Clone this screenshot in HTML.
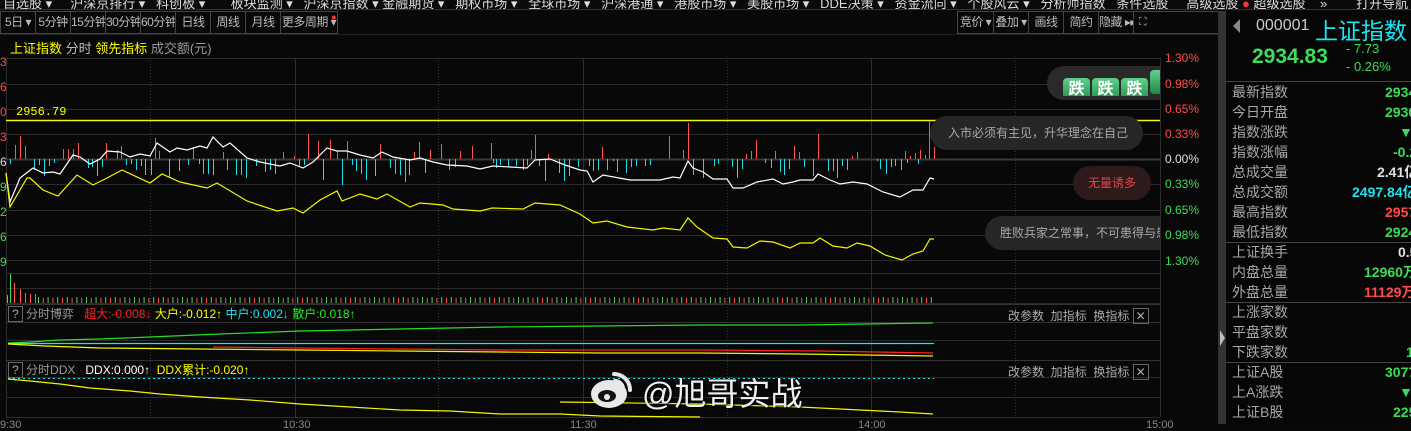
<!DOCTYPE html>
<html><head><meta charset="utf-8"><style>
*{margin:0;padding:0;box-sizing:border-box}
body{width:1411px;height:424px;overflow:hidden;background:#080808;font-family:"Liberation Sans","Noto Sans CJK SC",sans-serif;position:relative;color:#ccc}
.a{position:absolute;white-space:nowrap}
.tb{position:absolute;top:11px;height:23px;border:1px solid #444;display:flex}
.tb div{border-right:1px solid #444;color:#bbb;font-size:12px;line-height:21px;text-align:center;white-space:nowrap;overflow:hidden;letter-spacing:-0.5px;flex:none}
.tb div:last-child{border-right:none}
.lbl{position:absolute;left:1232px;font-size:14px;color:#a8a8a8;line-height:20px;white-space:nowrap}
.val{position:absolute;font-size:14px;font-weight:bold;line-height:20px;white-space:nowrap;font-family:"Liberation Sans","Noto Sans CJK SC",sans-serif}
.g{color:#3ddc5a}.r{color:#ff4b4b}.w{color:#e0e0e0}.c{color:#19e6f0}
.ax{position:absolute;left:1165px;font-size:12px;white-space:nowrap}
</style></head><body>
<div class="a" style="left:0;top:0;width:1411px;height:10px;background:#0a0a0a;border-bottom:1px solid #333;overflow:hidden">
<div class="a" style="top:-7px;left:3px;font-size:13px;color:#ddd">自选股 ▾ &nbsp;&nbsp;&nbsp; 沪深京排行 ▾ &nbsp; 科创板 ▾ &nbsp;&nbsp;&nbsp;&nbsp;&nbsp; 板块监测 ▾ &nbsp; 沪深京指数 ▾ 金融期货 ▾ &nbsp; 期权市场 ▾ &nbsp; 全球市场 ▾ &nbsp; 沪深港通 ▾ &nbsp; 港股市场 ▾ &nbsp; 美股市场 ▾ &nbsp; DDE决策 ▾ &nbsp; 资金流向 ▾ &nbsp; 个股风云 ▾ &nbsp; 分析师指数 &nbsp; 条件选股 &nbsp;&nbsp;&nbsp; 高级选股 <span style="color:#f33">●</span> 超级选股 &nbsp;&nbsp; » &nbsp;&nbsp;&nbsp;&nbsp;&nbsp;&nbsp; 打开导航</div></div>
<div class="tb" style="left:0;width:338px">
<div style="width:35px">5日 ▾</div><div style="width:35px">5分钟</div><div style="width:35px">15分钟</div><div style="width:35px">30分钟</div><div style="width:35px">60分钟</div><div style="width:35px">日线</div><div style="width:35px">周线</div><div style="width:35px">月线</div><div style="width:56px;position:relative;overflow:visible">更多周期 ▾<span style="position:absolute;right:1px;top:-5px;color:#f33;font-size:9px">●</span></div>
</div>
<div class="tb" style="left:957px;width:262px">
<div style="width:36px">竞价 ▾</div><div style="width:35px">叠加 ▾</div><div style="width:35px">画线</div><div style="width:35px">简约</div><div style="width:35px">隐藏 ▸▸</div><div style="width:17px;font-size:11px">⛶</div>
</div>
<div class="a" style="left:0;top:34px;width:1218px;height:1px;background:#222"></div>
<div class="a" style="left:10px;top:38px;font-size:13px"><span style="color:#ff0">上证指数</span> <span style="color:#bbb">分时</span> <span style="color:#ff0">领先指标</span> <span style="color:#999">成交额(元)</span></div>
<div class="a" style="left:0;top:50px;font-size:12px;color:#ff4b4b;line-height:25px;width:6px;overflow:hidden;white-space:normal">3<br>6<br>0<br>3<br><span style="color:#ddd">6</span><br><span style="color:#3ddc5a">9</span><br><span style="color:#3ddc5a">2</span><br><span style="color:#3ddc5a">6</span><br><span style="color:#3ddc5a">9</span></div>

<svg class="a" style="left:0;top:0" width="1218" height="424">
<g stroke="#2c2c2c" stroke-width="1" fill="none">
<path d="M6 58.5H1160M6 84.5H1160M6 109.5H1160M6 134.5H1160M6 184.5H1160M6 210.5H1160M6 235.5H1160M6 260.5H1160M6 273.5H1160M6 288.5H1160M6 303.5H1160M6 340.5H1160M6 377.5H1160M6 397.5H1160M6 417.5H1160"/>
<path d="M6.5 58V417M295.5 58V417M583.5 58V417M871.5 58V417M1160.5 58V417"/>
</g>
<path d="M6 159.5H1160" stroke="#3a3a3a" stroke-width="2"/>
<g stroke="#333" stroke-dasharray="1 2"><path d="M150.5 58V417M438.5 58V417M727.5 58V417M1015.5 58V417"/></g>
<path d="M6 120.5H1160" stroke="#f5f500" stroke-width="1.5"/>
<text x="16" y="115" fill="#ff0" font-size="12" font-family="Liberation Mono">2956.79</text>
<g stroke="#ff5555" stroke-width="1"><path d="M15.5 159V145M20.5 159V136M25.5 159V146M63.5 159V149M68.5 159V149M73.5 159V149M78.5 159V143M106.5 159V143M117.5 159V150M121.5 159V146M155.5 159V138M159.5 159V151M193.5 159V147M223.5 159V152M283.5 159V152M294.5 159V156M308.5 159V134M318.5 159V141M330.5 159V140M337.5 159V151M347.5 159V141M380.5 159V144M414.5 159V152M419.5 159V142M430.5 159V150M441.5 159V144M460.5 159V151M472.5 159V146M491.5 159V143M531.5 159V150M535.5 159V135M548.5 159V154M602.5 159V147M669.5 159V136M683.5 159V150M688.5 159V123M746.5 159V154M751.5 159V151M756.5 159V140M775.5 159V151M794.5 159V146M799.5 159V152M818.5 159V134M852.5 159V156M857.5 159V152M905.5 159V151M910.5 159V156M915.5 159V153M920.5 159V150M925.5 159V155M929.5 159V121M934.5 159V147"/></g>
<g stroke="#19dfe8" stroke-width="1"><path d="M10.5 159V164M34.5 159V170M39.5 159V165M44.5 159V176M49.5 159V166M54.5 159V163M88.5 159V168M92.5 159V167M97.5 159V176M102.5 159V167M126.5 159V165M131.5 159V164M136.5 159V170M141.5 159V166M145.5 159V175M151.5 159V175M169.5 159V177M179.5 159V171M188.5 159V165M199.5 159V164M203.5 159V174M208.5 159V174M213.5 159V175M227.5 159V170M236.5 159V175M241.5 159V175M246.5 159V178M256.5 159V166M265.5 159V172M270.5 159V170M275.5 159V174M299.5 159V166M304.5 159V165M323.5 159V180M342.5 159V185M352.5 159V165M356.5 159V171M361.5 159V174M366.5 159V180M375.5 159V176M390.5 159V168M395.5 159V174M400.5 159V175M405.5 159V182M409.5 159V175M425.5 159V173M449.5 159V170M455.5 159V167M493.5 159V163M496.5 159V168M500.5 159V165M508.5 159V167M516.5 159V166M523.5 159V170M527.5 159V165M539.5 159V166M545.5 159V181M559.5 159V173M564.5 159V181M569.5 159V176M578.5 159V167M589.5 159V166M593.5 159V171M598.5 159V170M607.5 159V170M613.5 159V161M617.5 159V172M626.5 159V173M631.5 159V167M636.5 159V166M645.5 159V166M650.5 159V165M693.5 159V175M703.5 159V178M714.5 159V166M718.5 159V164M732.5 159V167M737.5 159V178M742.5 159V169M765.5 159V163M771.5 159V168M780.5 159V172M784.5 159V175M789.5 159V169M804.5 159V167M813.5 159V176M828.5 159V171M833.5 159V171M837.5 159V178M842.5 159V166M847.5 159V170M877.5 159V161M880.5 159V169M886.5 159V174M891.5 159V167M895.5 159V166M901.5 159V170M907.5 159V163M918.5 159V164"/></g>
<polyline fill="none" stroke="#fff" stroke-width="1.2" points="6,173 10,202 20,178 33,168 43,173 53,172 60,174 73,155 80,157 90,164 100,159 107,151 120,152 130,157 140,154 150,156 157,143 170,152 177,148 187,150 200,146 207,148 213,137 223,147 230,143 247,158 260,162 280,166 290,163 303,168 313,162 327,148 337,151 347,151 360,155 373,158 382,152 393,157 410,160 420,158 433,162 447,165 467,166 480,169 493,166 527,168 535,160 550,159 565,165 580,170 587,171 593,182 603,175 630,180 660,180 673,177 680,178 688,161 693,168 703,172 713,179 727,179 733,188 743,188 757,182 773,179 783,184 793,182 800,180 813,180 818,174 830,180 840,184 853,182 867,184 883,192 900,197 913,190 923,190 930,178 934,179"/>
<polyline fill="none" stroke="#f5f500" stroke-width="1.2" points="6,173 10,207 27,178 30,178 43,190 58,196 77,175 93,185 107,178 122,170 150,183 162,174 180,182 207,188 217,183 247,201 277,211 293,208 303,213 320,200 337,191 342,201 360,194 377,199 387,194 410,207 420,203 443,205 453,209 480,211 492,208 523,209 535,203 560,205 580,214 593,223 607,221 627,227 653,230 663,228 680,230 688,218 697,227 713,238 727,239 733,247 747,248 760,241 773,242 790,248 800,243 813,243 820,238 833,246 847,248 857,243 870,246 885,255 902,260 913,254 923,251 930,239 934,239"/>
<g stroke="#3ddc5a"><path d="M10.5 303V274M7.5 303V295"/></g>
<g stroke="#ff5555"><path d="M14.5 303V283M20.5 303V289M25.5 303V293M30.5 303V294M35.5 303V294"/></g>
<defs><pattern id="vb" x="38" y="0" width="9.6" height="424" patternUnits="userSpaceOnUse"><rect x="0" y="297" width="1" height="6" fill="#3ddc5a"/><rect x="4.8" y="298" width="1" height="5" fill="#ff5555"/></pattern></defs>
<rect x="38" y="290" width="896" height="13" fill="url(#vb)"/>
<path d="M6 304.5H1160M6 322.5H1160M6 360.5H1160" stroke="#333"/>
<polyline fill="none" stroke="#22e022" stroke-width="1.2" points="8,343 30,342 60,340 100,339 150,337 220,334 300,331 400,329 500,327 600,326 700,325 800,325 933,323"/>
<path d="M8 343.5H934" stroke="#19e6f0" stroke-width="1.2"/>
<polyline fill="none" stroke="#ff2020" stroke-width="1.2" points="213,347 300,348 400,349 500,350 600,350 700,350 820,351 933,353"/>
<polyline fill="none" stroke="#f5f500" stroke-width="1.2" points="8,344 45,346 100,348 200,349 300,350 400,351 500,352 600,353 700,353 800,354 933,356"/>
<path d="M8 378.5H934" stroke="#19e6f0" stroke-dasharray="2 3"/>
<polyline fill="none" stroke="#f5f500" stroke-width="1.2" points="8,379 30,381 60,384 90,388 130,391 160,394 200,397 250,400 300,404 350,407 400,410 450,411 500,414 560,414 600,416 700,417"/>
<polyline fill="none" stroke="#f5f500" stroke-width="1.2" points="560,402 700,404 800,407 900,412 933,414"/>
</svg>
<div class="a" style="left:8px;top:307px;font-size:12px;line-height:14px"><span style="border:1px solid #666;color:#aaa;padding:0 3px">?</span> <span style="color:#999">分时博弈</span> &nbsp; <span style="color:#f22">超大:-0.008↓</span> <span style="color:#ff0">大户:-0.012↑</span> <span style="color:#19e6f0">中户:0.002↓</span> <span style="color:#2e2">散户:0.018↑</span></div>
<div class="a" style="left:8px;top:363px;font-size:12px;line-height:14px"><span style="border:1px solid #666;color:#aaa;padding:0 3px">?</span> <span style="color:#999">分时DDX</span> &nbsp; <span style="color:#fff">DDX:0.000↑</span> &nbsp;<span style="color:#ff0">DDX累计:-0.020↑</span></div>
<div class="a" style="left:1008px;top:307px;font-size:12px;color:#aaa">改参数 &nbsp;加指标 &nbsp;换指标 <span style="border:1px solid #666;padding:0 2px">✕</span></div>
<div class="a" style="left:1008px;top:363px;font-size:12px;color:#aaa">改参数 &nbsp;加指标 &nbsp;换指标 <span style="border:1px solid #666;padding:0 2px">✕</span></div>
<div class="ax r" style="top:51px">1.30%</div><div class="ax r" style="top:77px">0.98%</div><div class="ax r" style="top:102px">0.65%</div><div class="ax r" style="top:127px">0.33%</div><div class="ax w" style="top:152px">0.00%</div><div class="ax g" style="top:177px">0.33%</div><div class="ax g" style="top:203px">0.65%</div><div class="ax g" style="top:228px">0.98%</div><div class="ax g" style="top:254px">1.30%</div>
<div class="a" style="left:1047px;top:66px;width:113px;height:34px;background:#2a2a2a;border-radius:17px 0 0 17px"></div>
<div class="a" style="left:1063px;top:70px;width:97px;height:26px;overflow:hidden">
<span style="display:inline-block;width:27px;height:24px;margin-right:2px;background:linear-gradient(#5fd08a,#1f8a48);border-radius:4px;color:#fff;font-size:16px;font-weight:bold;text-align:center;line-height:24px">跌</span><span style="display:inline-block;width:27px;height:24px;margin-right:2px;background:linear-gradient(#5fd08a,#1f8a48);border-radius:4px;color:#fff;font-size:16px;font-weight:bold;text-align:center;line-height:24px">跌</span><span style="display:inline-block;width:27px;height:24px;margin-right:2px;background:linear-gradient(#5fd08a,#1f8a48);border-radius:4px;color:#fff;font-size:16px;font-weight:bold;text-align:center;line-height:24px">跌</span><span style="display:inline-block;width:10px;height:24px;background:linear-gradient(#5fd08a,#1f8a48);border-radius:4px 0 0 4px"></span></div>
<div class="a" style="left:930px;top:116px;width:213px;height:34px;background:#262626;border-radius:17px;color:#aaa;font-size:12px;line-height:34px;padding-left:18px">入市必须有主见，升华理念在自己</div>
<div class="a" style="left:1073px;top:166px;width:78px;height:34px;background:#2d1a1a;border-radius:17px;color:#e04848;font-size:12px;line-height:34px;text-align:center">无量诱多</div>
<div class="a" style="left:985px;top:216px;width:175px;height:34px;background:#262626;border-radius:17px 0 0 17px;color:#aaa;font-size:12px;line-height:34px;padding-left:15px;overflow:hidden">胜败兵家之常事，不可患得与患</div>
<svg class="a" style="left:588px;top:368px" width="50" height="44"><ellipse cx="21" cy="26" rx="18" ry="14" fill="#e8e8e8"/><ellipse cx="19" cy="28" rx="9" ry="6" fill="#111"/><circle cx="19" cy="29" r="3" fill="#e8e8e8"/><path d="M26 6a16 16 0 0 1 16 16M27 13a8 8 0 0 1 8 8" stroke="#e8e8e8" stroke-width="4" fill="none" stroke-linecap="round"/></svg>
<div class="a" style="left:642px;top:369px;font-size:32px;color:#f0f0f0;text-shadow:1px 1px 2px #000">@旭哥实战</div>
<div class="a" style="left:0;top:419px;font-size:11px;color:#888;width:1160px;height:5px">
<span class="a" style="left:0">9:30</span><span class="a" style="left:283px">10:30</span><span class="a" style="left:570px">11:30</span><span class="a" style="left:858px">14:00</span><span class="a" style="left:1146px">15:00</span></div>
<div class="a" style="left:1218px;top:11px;width:8px;height:413px;background:#333"></div>
<div class="a" style="left:1220px;top:330px;width:0;height:0;border-top:8px solid transparent;border-bottom:8px solid transparent;border-left:5px solid #bbb"></div>
<div class="a" style="left:1226px;top:10px;width:185px;height:414px;background:#060606"></div>
<div class="a" style="left:1233px;top:19px;width:0;height:0;border-top:7px solid transparent;border-bottom:7px solid transparent;border-right:7px solid #888"></div>
<div class="a" style="left:1256px;top:17px;font-size:16px;color:#ccc">000001</div>
<div class="a" style="left:1315px;top:12px;font-size:23px;color:#19e6f0">上证指数</div>
<div class="a g" style="left:1252px;top:45px;font-size:21px;font-weight:bold">2934.83</div>
<div class="a g" style="left:1346px;top:41px;font-size:13px">- 7.73</div>
<div class="a g" style="left:1346px;top:59px;font-size:13px">- 0.26%</div>
<div class="a" style="left:1226px;top:81px;width:185px;height:1px;background:#444"></div>
<div class="a" style="left:1226px;top:242px;width:185px;height:1px;background:#444"></div>
<div class="a" style="left:1226px;top:302px;width:185px;height:1px;background:#444"></div>
<div class="a" style="left:1226px;top:362px;width:185px;height:1px;background:#444"></div>
<div class="lbl" style="top:82px">最新指数</div><div class="val g" style="left:1385px;top:82px">2934</div>
<div class="lbl" style="top:102px">今日开盘</div><div class="val g" style="left:1385px;top:102px">2930</div>
<div class="lbl" style="top:122px">指数涨跌</div><div class="val g" style="left:1399px;top:122px">▼7</div>
<div class="lbl" style="top:142px">指数涨幅</div><div class="val g" style="left:1393px;top:142px">-0.2</div>
<div class="lbl" style="top:162px">总成交量</div><div class="val w" style="left:1377px;top:162px">2.41亿</div>
<div class="lbl" style="top:182px">总成交额</div><div class="val c" style="left:1352px;top:182px">2497.84亿</div>
<div class="lbl" style="top:202px">最高指数</div><div class="val r" style="left:1385px;top:202px">2957</div>
<div class="lbl" style="top:222px">最低指数</div><div class="val g" style="left:1385px;top:222px">2924</div>
<div class="lbl" style="top:242px">上证换手</div><div class="val w" style="left:1398px;top:242px">0.5</div>
<div class="lbl" style="top:262px">内盘总量</div><div class="val g" style="left:1364px;top:262px">12960万</div>
<div class="lbl" style="top:282px">外盘总量</div><div class="val r" style="left:1364px;top:282px">11129万</div>
<div class="lbl" style="top:302px">上涨家数</div>
<div class="lbl" style="top:322px">平盘家数</div>
<div class="lbl" style="top:342px">下跌家数</div><div class="val g" style="left:1406px;top:342px">1</div>
<div class="lbl" style="top:362px">上证A股</div><div class="val g" style="left:1385px;top:362px">3077</div>
<div class="lbl" style="top:382px">上A涨跌</div><div class="val g" style="left:1399px;top:382px">▼8</div>
<div class="lbl" style="top:402px">上证B股</div><div class="val g" style="left:1393px;top:402px">225</div>
</body></html>
